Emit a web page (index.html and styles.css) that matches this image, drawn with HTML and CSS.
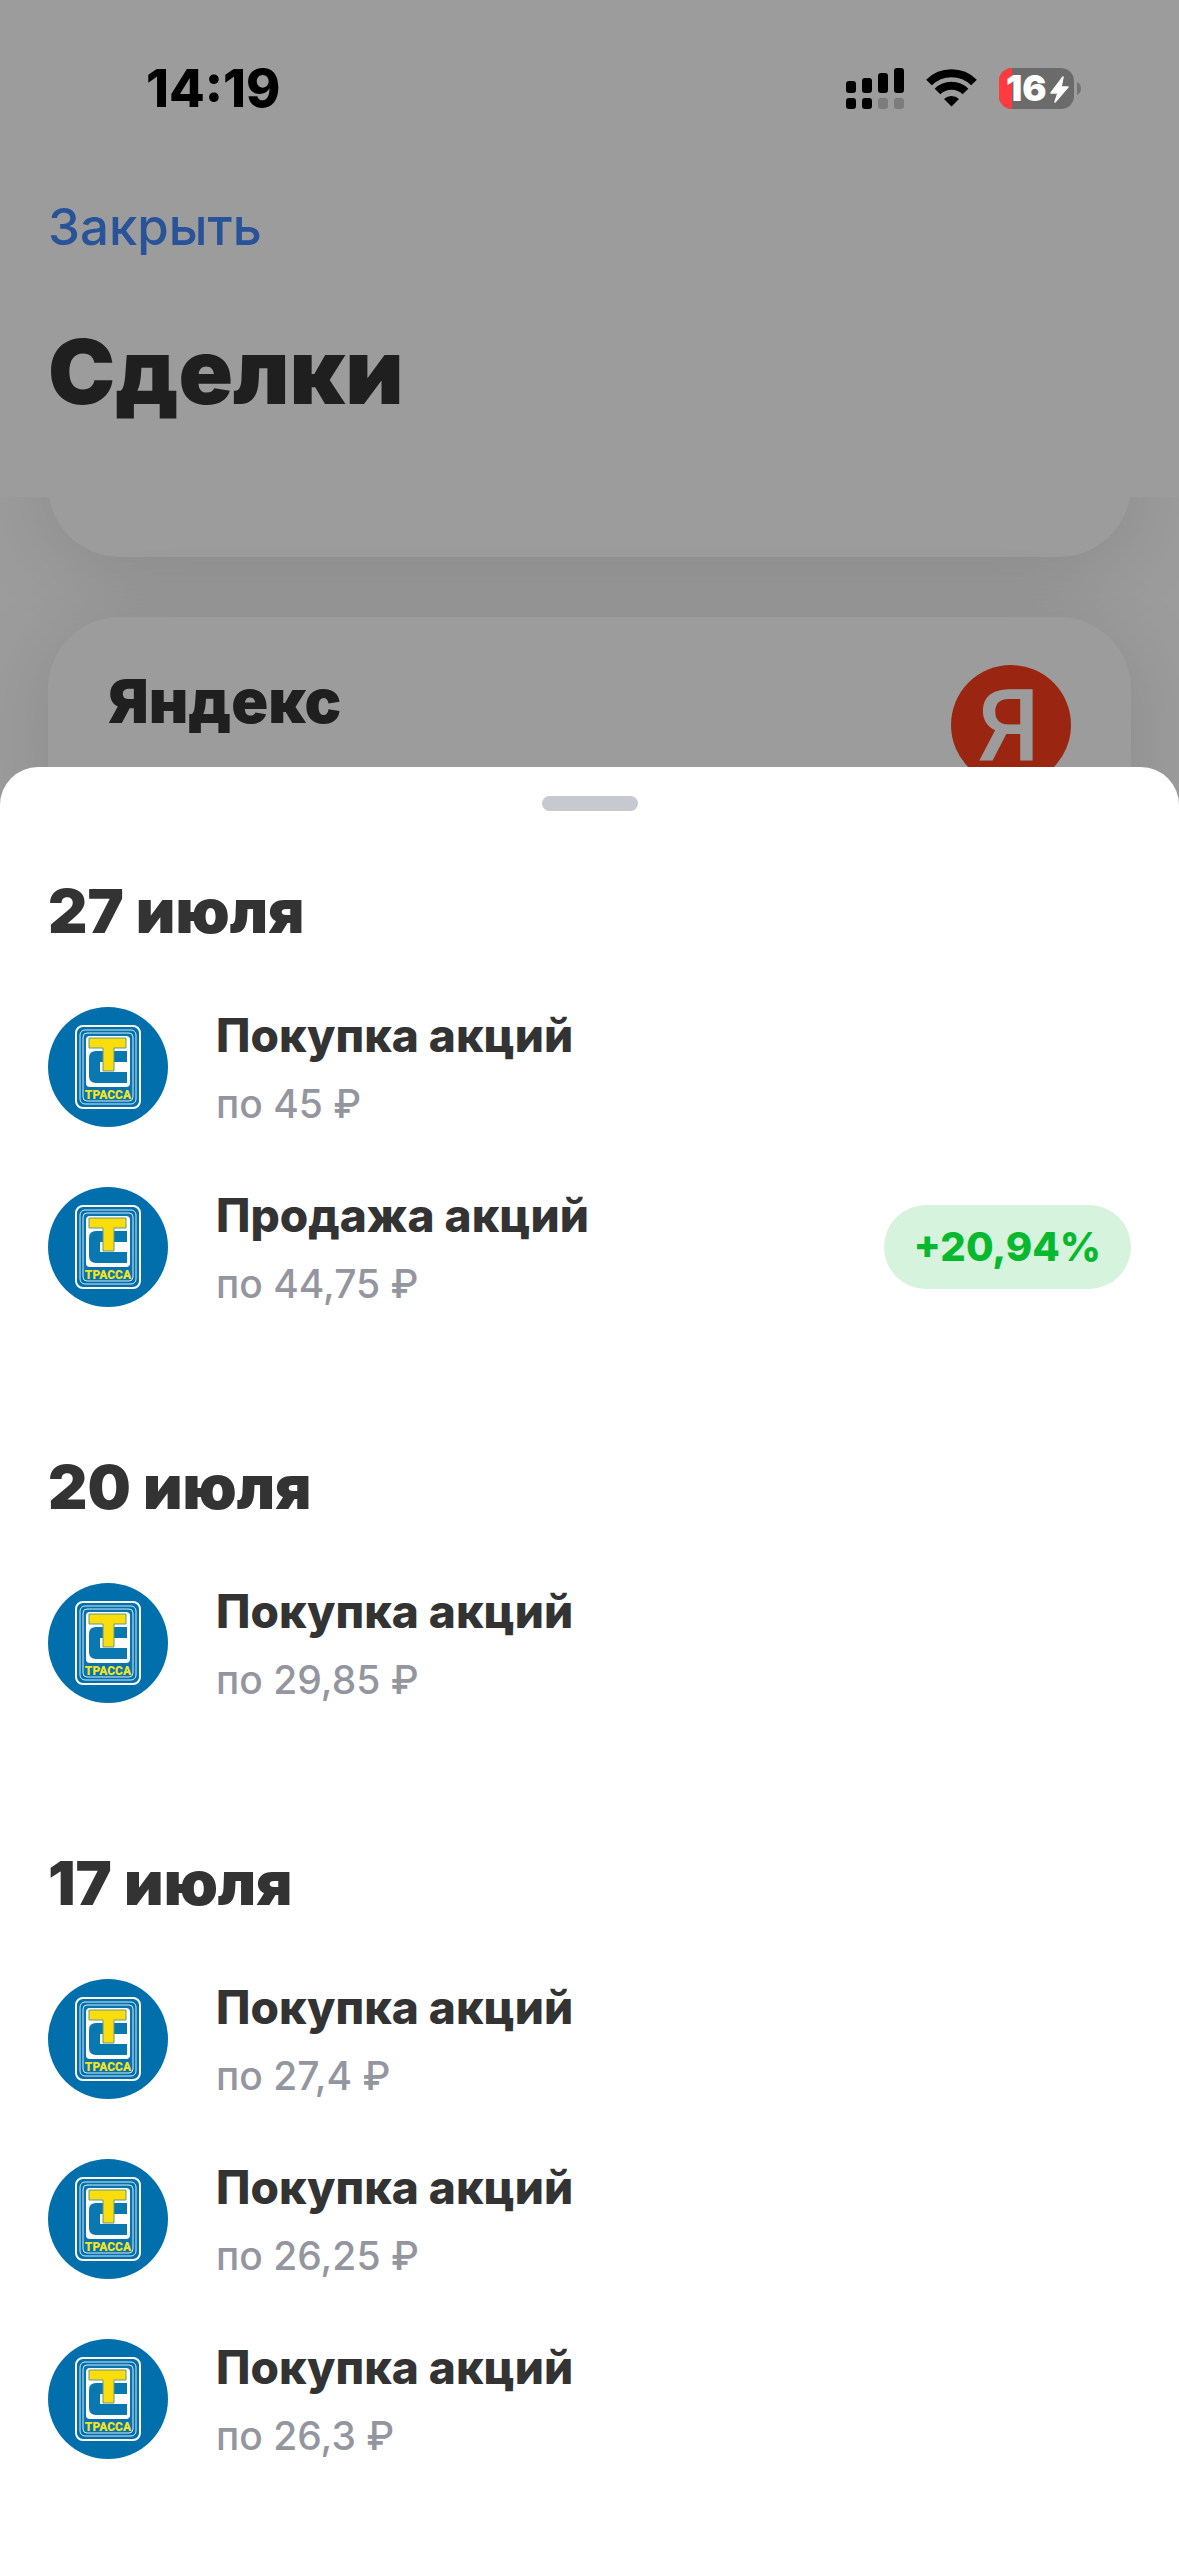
FILE: index.html
```html
<!doctype html>
<html lang="ru">
<head>
	<meta charset="UTF-8">
	<meta name="viewport" content="width=device-width">
	<title>Сделки</title>
	<link rel="stylesheet" href="styles.css">
</head>
<body>
	<svg class="sprite" aria-hidden="true">
		<symbol id="trassa" viewBox="0 0 120 120">
			<circle cx="60" cy="60" r="60" fill="#006fab"/>
			<rect x="28" y="19" width="64" height="82" rx="7" fill="none" stroke="#fff" stroke-width="2"/>
			<rect x="32" y="23" width="56" height="74" rx="5" fill="none" stroke="#d5edf8" stroke-width="1"/>
			<rect x="35" y="26" width="50" height="68" rx="4" fill="#0a73ad" stroke="#d5edf8" stroke-width="1"/>
			<path d="M42 29h36a4 4 0 0 1 4 4v43a4 4 0 0 1-4 4h-36a4 4 0 0 1-4-4v-43a4 4 0 0 1 4-4z" fill="#fff"/>
			<path d="M79 44v11h-27v10h27v11h-31q-7 0-7-7v-18q0-7 7-7z" fill="#0a78b0"/>
			<path d="M41 31h37v10h-12v23h-11v-23h-14z" fill="#fbdd0b" stroke="#5d9a86" stroke-width="1"/>
			<text class="trassa_name" x="60" y="92" text-anchor="middle">ТРАССА</text>
		</symbol>
	</svg>

	<div class="page">
		<div class="status">
			<span class="time">14:19</span>
			<div class="status_icons">
				<svg width="58" height="41" viewBox="0 0 58 41">
					<rect x="0" y="13" width="10" height="12" rx="3"/>
					<rect x="16" y="10" width="10" height="15" rx="3"/>
					<rect x="32" y="5" width="10" height="20" rx="3"/>
					<rect x="48" y="0" width="10" height="25" rx="3"/>
					<rect x="0" y="30" width="10" height="11" rx="3"/>
					<rect x="16" y="30" width="10" height="11" rx="3"/>
					<rect x="32" y="30" width="10" height="11" rx="3" opacity=".2"/>
					<rect x="48" y="30" width="10" height="11" rx="3" opacity=".2"/>
				</svg>
				<svg width="51" height="38" viewBox="0 0 51 38">
					<g fill="none" stroke="#000" stroke-width="8">
						<path d="M3 13.500a32 32 0 0 1 45 0"/>
						<path d="M11.500 22.500a20 20 0 0 1 28 0"/>
					</g>
					<path d="M25.500 37.500l-7.500-7.500a11 11 0 0 1 15 0z"/>
				</svg>
				<svg class="battery" width="83" height="41" viewBox="0 0 83 41">
					<clipPath id="bat"><rect width="75" height="41" rx="13"/></clipPath>
					<g clip-path="url(#bat)">
						<rect width="75" height="41" fill="#6b6b6b"/>
						<rect width="13" height="41" fill="#ff3b3f"/>
					</g>
					<path d="M78 14q4 2 4 6.500t-4 6.500z" fill="#737373"/>
					<text class="charge" x="7" y="33">16</text>
					<path d="M64 9l-12 16h7l-3 9 13-15h-7z" fill="#fff" stroke="#fff" stroke-width="1.500" stroke-linejoin="round"/>
				</svg>
			</div>
		</div>
		<header class="top">
			<button class="close">Закрыть</button>
			<h1>Сделки</h1>
		</header>
		<div class="cards">
			<div class="card card_end"></div>
			<div class="card">
				<h2 class="company">Яндекс</h2>
				<svg class="logo" viewBox="0 0 120 120" role="img" aria-label="Яндекс">
					<circle cx="60" cy="60" r="60" fill="#fc3f1d"/>
					<text class="ya" x="58" y="96" text-anchor="middle">Я</text>
				</svg>
			</div>
		</div>
	</div>

	<main class="sheet">
		<div class="handle"></div>
		<section>
			<h2>27 июля</h2>
			<ul>
				<li class="deal">
					<svg class="logo"><use href="#trassa"/></svg>
					<div class="info"><h3>Покупка акций</h3><p>по 45 ₽</p></div>
				</li>
				<li class="deal">
					<svg class="logo"><use href="#trassa"/></svg>
					<div class="info"><h3>Продажа акций</h3><p>по 44,75 ₽</p></div>
					<span class="profit">+20,94%</span>
				</li>
			</ul>
		</section>
		<section>
			<h2>20 июля</h2>
			<ul>
				<li class="deal">
					<svg class="logo"><use href="#trassa"/></svg>
					<div class="info"><h3>Покупка акций</h3><p>по 29,85 ₽</p></div>
				</li>
			</ul>
		</section>
		<section>
			<h2>17 июля</h2>
			<ul>
				<li class="deal">
					<svg class="logo"><use href="#trassa"/></svg>
					<div class="info"><h3>Покупка акций</h3><p>по 27,4 ₽</p></div>
				</li>
				<li class="deal">
					<svg class="logo"><use href="#trassa"/></svg>
					<div class="info"><h3>Покупка акций</h3><p>по 26,25 ₽</p></div>
				</li>
				<li class="deal">
					<svg class="logo"><use href="#trassa"/></svg>
					<div class="info"><h3>Покупка акций</h3><p>по 26,3 ₽</p></div>
				</li>
			</ul>
		</section>
	</main>
</body>
</html>
```
FILE: styles.css
```css
*{box-sizing: border-box;
  margin: 0;
  padding: 0;}
body{display: flex;
     flex-direction: column;
     min-height: 100vh;
     background-color: #fff;
     color: #333;
     font-family: Inter, "Liberation Sans", sans-serif;}
ul{list-style: none;}
.sprite{display: none;}

/* page under the sheet */
.page{position: relative;
      overflow: hidden;}
.page::after{content: "";
             position: absolute;
             inset: 0;
             z-index: 1;
             background-color: rgba(0,0,0,0.39);}
.status{position: relative;
        z-index: 2;
        display: flex;
        justify-content: space-between;
        align-items: center;
        height: 176px;
        padding: 0 97px 0 146px;
        color: #000;}
.time{font-size: 52px;
      font-weight: 800;}
.status_icons{display: flex;
              align-items: center;
              gap: 22px;}
.battery{overflow: visible;}
.charge{font-size: 36px;
        font-weight: 900;
        fill: #fff;}
.top{position: relative;
     z-index: 1;
     height: 321px;
     padding: 20px 48px 0;
     background-color: #fff;}
.close{display: block;
       border: 0;
       background: none;
       color: #4488f8;
       font-family: inherit;
       font-size: 51px;
       font-weight: 500;
       line-height: 62px;}
h1{margin-top: 60px;
   font-size: 90px;
   font-weight: 900;
   line-height: 108px;}
.cards{display: flex;
       flex-direction: column;
       gap: 60px;
       padding: 0 48px;}
.card{display: flex;
      justify-content: space-between;
      align-items: flex-start;
      padding: 48px 60px;
      border-radius: 72px;
      background-color: #fff;
      box-shadow: 0 12px 90px rgba(0,0,0,0.12);}
.card_end{height: 160px;
          margin-top: -100px;}
.company{font-size: 61px;
         font-weight: 900;
         line-height: 72px;}
.logo{flex: none;
      display: block;
      width: 120px;
      height: 120px;}
.ya{font-family: Roboto, sans-serif;
    font-size: 100px;
    font-weight: 500;
    fill: #fff;}
.trassa_name{font-family: Roboto, sans-serif;
             font-size: 12px;
             font-weight: 900;
             fill: #f2e51f;}

/* sheet */
.sheet{position: relative;
       z-index: 3;
       flex: 1;
       margin-top: -66px;
       padding: 29px 48px 60px;
       border-radius: 38px 38px 0 0;
       background-color: #fff;}
.handle{width: 96px;
        height: 15px;
        margin: 0 auto;
        border-radius: 8px;
        background-color: #c7c9d0;}
section{padding-top: 64px;
        padding-bottom: 80px;}
.sheet h2{margin-bottom: 60px;
          font-size: 61px;
          font-weight: 900;
          line-height: 72px;}
.sheet ul{display: flex;
          flex-direction: column;
          gap: 60px;}
.deal{display: flex;
      align-items: center;
      gap: 48px;}
.info{flex: 1;}
.info h3{font-size: 46px;
         font-weight: 800;
         line-height: 54px;}
.info p{margin-top: 20px;
        color: #94969f;
        font-size: 39px;
        font-weight: 500;
        line-height: 44px;}
.profit{padding: 0 30px;
        border-radius: 42px;
        background-color: #d6f3de;
        color: #08b930;
        font-size: 40px;
        font-weight: 800;
        line-height: 84px;}
```
